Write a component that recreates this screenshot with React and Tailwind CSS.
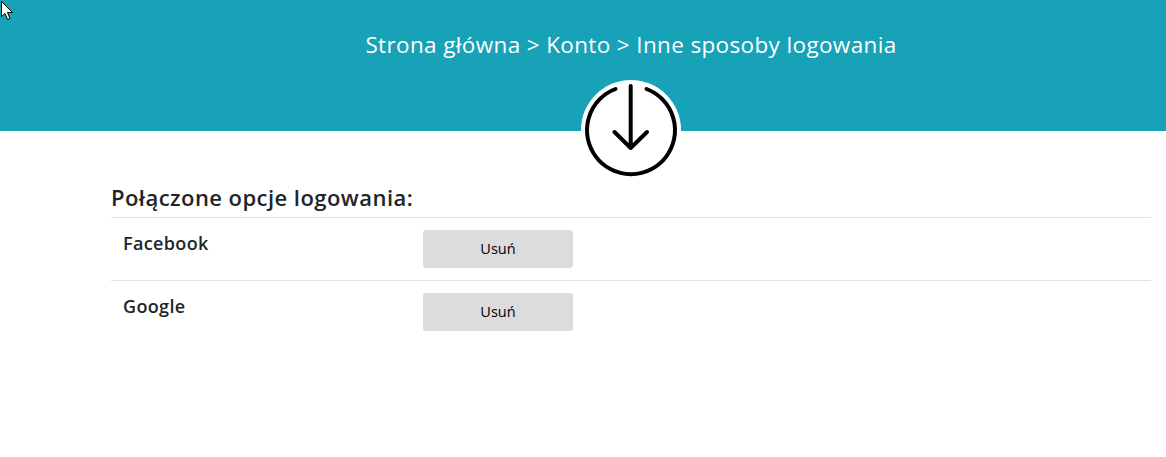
const ROWS = ["Facebook", "Google"];

function Cursor() {
  return (
    <svg className="absolute left-0 top-0" width="14" height="21" viewBox="0 0 14 21">
      <path d="M1.5 1.5V16.5L5 13.5L7.5 19.5L10 18.5L7.5 12.5H12.5Z" fill="#fff" stroke="#000" strokeWidth="1" />
    </svg>
  );
}

function DownCircle() {
  return (
    <div className="absolute left-[581px] top-[80px] w-[100px] h-[100px] rounded-full bg-white">
      <svg width="100" height="100" viewBox="0 0 100 100" fill="none" stroke="#000" strokeLinecap="round" strokeLinejoin="round">
        <path d="M34.5 9A44 44 0 1 0 65.5 9" strokeWidth="4" />
        <path d="M49.7 6V68M33.5 52L49.7 68L66 52" strokeWidth="4" />
      </svg>
    </div>
  );
}

export default function App() {
  return (
    <div className="relative min-h-[457px] bg-white font-['Open_Sans','Noto_Sans',sans-serif] text-[#212529]">
      <Cursor />
      <header className="h-[131px] bg-[#17a2b8] pl-[111px] pr-[15px] pt-[28px]">
        <p className="text-center text-[22.5px] leading-[33px] tracking-[0.36px] text-white">
          Strona główna &gt; Konto &gt; Inne sposoby logowania
        </p>
      </header>
      <DownCircle />
      <main className="pl-[111px] pr-[15px] pt-[47px]">
        <h2 className="text-[22px] leading-[39px] tracking-[0.45px] font-semibold">Połączone opcje logowania:</h2>
        {ROWS.map((name) => (
          <div key={name} className="flex h-[63px] border-t border-[#dee2e6] pl-[12px] pt-[12px]">
            <span className="w-[300px] text-[18px] leading-[27px] tracking-[0.35px] font-semibold">{name}</span>
            <button className="w-[150px] h-[38px] rounded-[3px] bg-[#dcdcdc] text-[14.5px] text-black">Usuń</button>
          </div>
        ))}
      </main>
    </div>
  );
}
